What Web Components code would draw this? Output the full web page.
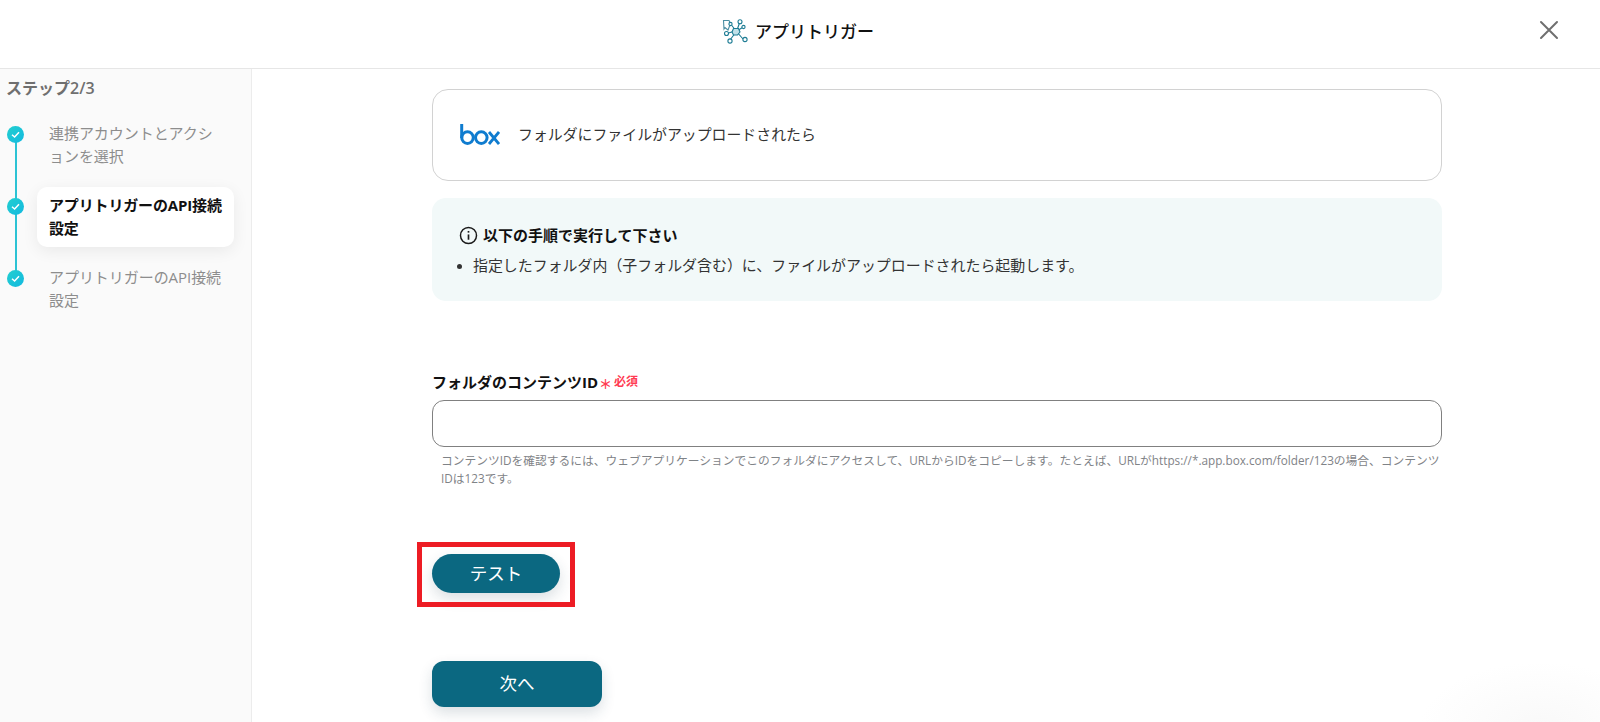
<!DOCTYPE html>
<html lang="ja"><head><meta charset="utf-8"><title>アプリトリガー</title>
<style>
html,body{margin:0;height:100%;overflow:hidden;background:#fff}
body{font-family:"Open Sans","Noto Sans CJK JP",sans-serif;color:#111}
</style></head><body>
<app-shell>
  <top-bar slot="top">アプリトリガー</top-bar>
  <step-rail slot="side"></step-rail>
  <trigger-form slot="main"></trigger-form>
</app-shell>
<script>
function def(name,html){customElements.define(name,class extends HTMLElement{constructor(){super();this.attachShadow({mode:'open'}).innerHTML=html}})}
def('app-shell',`<style>:host{display:grid;grid-template-rows:69px 1fr;grid-template-columns:252px 1fr;height:722px;overflow:hidden;position:relative}
::slotted([slot=top]){grid-column:1/3}
.glow{position:absolute;right:-60px;bottom:-70px;width:240px;height:130px;border-radius:50%;background:radial-gradient(closest-side,#f9f9f9,#fff0);pointer-events:none}</style>
<slot name="top"></slot><slot name="side"></slot><slot name="main"></slot><div class="glow"></div>`);
def('top-bar',`<style>:host{display:flex;align-items:center;justify-content:center;border-bottom:1px solid #e6e6e6;box-sizing:border-box;position:relative;background:#fff;padding:0 4px 7px 0}
.t{display:flex;align-items:center;gap:7px;font-size:17px;font-weight:500;color:#111}
svg.i{width:26px;height:26px;display:block}
button{position:absolute;right:41px;top:20px;width:20px;height:20px;padding:0;border:0;background:none}
button svg{display:block}</style>
<div class="t"><svg class="i" viewBox="0 0 26 26" fill="none" stroke="#1d7c94" stroke-width="1.1">
<path d="M14.5 13.5 17.5 5M14.5 13.5 7.5 4.5M14 13.5 20.5 9.5M14.5 13.5 21 21M14 14 8 22M13 13 5 15.5"/>
<path d="M1.5 2.5H7L8.5 5.5 6 12 3 9.5 2 11z" stroke="#4b8ea3"/>
<path d="M11.5 10.5h5l1.5 3.5-2.5 3h-4l-1.5-3z" fill="#bfe0e8"/>
<circle cx="18" cy="3.8" r="2" fill="#fff"/><circle cx="21.5" cy="9" r="1.6" fill="#fff"/><circle cx="23" cy="21.5" r="2.1" fill="#fff"/><circle cx="8" cy="23" r="2.1" fill="#fff"/><circle cx="4.5" cy="15.5" r="2" fill="#fff"/><circle cx="8.5" cy="6" r="1.6" fill="#fff"/>
</svg><slot></slot></div>
<button aria-label="閉じる"><svg width="20" height="20" viewBox="0 0 20 20"><path d="M2 2 18 18M18 2 2 18" stroke="#6f6f6f" stroke-width="2" stroke-linecap="round"/></svg></button>`);
def('step-dot',`<style>:host{display:block;width:17px;height:17px;border-radius:50%;background:linear-gradient(135deg,#23cfcf,#12b9e0);flex:none}
svg{display:block}</style><svg width="17" height="17" viewBox="0 0 17 17"><path d="M5 8.8 7.6 11 12 6.3" fill="none" stroke="#fff" stroke-width="1.5"/></svg>`);
def('step-item',`<style>:host{display:grid;grid-template-columns:37px 197px;align-items:start;position:relative}
step-dot{margin:11px 0 0 7px;position:relative;z-index:1}
.b{padding:7px 12px;font-size:15px;line-height:22.5px;height:60px;box-sizing:border-box;color:#8d8d8d;border-radius:10px;letter-spacing:-.05px}
:host([active]) .b{background:#fff;color:#111;font-weight:700;box-shadow:0 4px 16px rgba(0,0,0,.07);letter-spacing:-.15px}</style>
<step-dot></step-dot><div class="b"><slot></slot></div>`);
def('step-rail',`<style>:host{display:block;background:#fafafa;border-right:1px solid #ececec;box-sizing:border-box;height:653px;position:relative}
h2{margin:0;padding:8px 0 0 6px;font-size:16px;line-height:22px;font-weight:600;color:#6f6f6f}
.list{display:flex;flex-direction:column;gap:12px;margin-top:16px;position:relative}
.line{position:absolute;left:15px;top:20px;width:2px;height:144px;background:#2cc3d4}</style>
<h2>ステップ2/3</h2><div class="list"><div class="line"></div>
<step-item>連携アカウントとアクションを選択</step-item>
<step-item active>アプリトリガーのAPI接続設定</step-item>
<step-item>アプリトリガーのAPI接続設定</step-item></div>`);
def('app-card',`<style>:host{display:flex;align-items:center;gap:18px;height:92px;box-sizing:border-box;border:1px solid #d2d2d2;border-radius:16px;padding:0 27px;font-size:14.9px;color:#333}
svg{display:block;flex:none}.x{margin-bottom:3px}</style>
<svg width="40" height="22" viewBox="0 0 40 22" fill="none" stroke="#0f7ccf" stroke-width="3"><path d="M1.7 0V14"/><circle cx="7.5" cy="13.6" r="5.8"/><circle cx="21.3" cy="13.6" r="5.8"/><path d="M29 8 39 20M39 8 29 20" stroke-width="2.8"/></svg><span class="x"><slot></slot></span>`);
def('notice-box',`<style>:host{display:block;height:103px;box-sizing:border-box;background:#f2f9f9;border-radius:14px;padding:26px 27px 0}
.h{display:flex;align-items:center;gap:5px;font-size:15px;line-height:22px;font-weight:600;color:#111}
svg{display:block}
ul{margin:8px 0 0;padding:0 0 0 14px;font-size:14.95px;line-height:22px;color:#333}li::marker{font-size:13px}</style>
<div class="h"><svg width="19" height="19" viewBox="0 0 18 18" fill="none" stroke="#1a1a1a" stroke-width="1.4"><circle cx="9" cy="9" r="7.6"/><path d="M9 8v5" stroke-width="1.6"/><path d="M9 4.7v1.6" stroke-width="1.6"/></svg>以下の手順で実行して下さい</div>
<ul><li>指定したフォルダ内（子フォルダ含む）に、ファイルがアップロードされたら起動します。</li></ul>`);
def('field-block',`<style>:host{display:block}
.l{display:flex;align-items:center;font-size:15px;line-height:20px;font-weight:700;color:#111}
.s{color:#ff3b52;font-size:13px;font-weight:700;margin:4px 2px 0 1px;line-height:16px}
.r{color:#ff3b52;font-size:12px;font-weight:700}
.inp{display:block;width:100%;height:47px;box-sizing:border-box;margin-top:8px;border:1px solid #808080;border-radius:12px;background:#fff}
.h{margin:4px 0 0;padding-left:9px;font-size:11.75px;line-height:18px;color:#7f8387}</style>
<div class="l">フォルダのコンテンツID<span class="s">＊</span><span class="r">必須</span></div>
<input class="inp" type="text" aria-label="フォルダのコンテンツID">
<p class="h">コンテンツIDを確認するには、ウェブアプリケーションでこのフォルダにアクセスして、URLからIDをコピーします。たとえば、URLがhttps://*.app.box.com/folder/123の場合、コンテンツIDは123です。</p>`);
def('action-button',`<style>:host{display:inline-flex;align-items:center;justify-content:center;background:#0b6881;color:#fff;font-size:17.5px;line-height:1;box-shadow:0 6px 14px rgba(30,60,80,.16);border-radius:var(--r,20px);width:var(--w,128px);height:var(--h,39px);box-sizing:border-box}</style><slot></slot>`);
def('highlight-frame',`<style>:host{display:inline-block;position:relative;line-height:0}
.f{position:absolute;left:-15px;top:-12px;width:158px;height:65px;box-sizing:border-box;border:5px solid #ed1c24;pointer-events:none}</style><slot></slot><div class="f"></div>`);
def('trigger-form',`<style>:host{display:block;padding:20px 158px 0 180px;height:653px;box-sizing:border-box;overflow:hidden}
app-card{margin-bottom:17px}
field-block{margin-top:71px}
.t{margin-top:67px}
.n{margin-top:68px}
.nb{--w:170px;--h:46px;--r:12px}</style>
<app-card>フォルダにファイルがアップロードされたら</app-card>
<notice-box></notice-box>
<field-block></field-block>
<div class="t"><highlight-frame><action-button>テスト</action-button></highlight-frame></div>
<div class="n"><action-button class="nb">次へ</action-button></div>`);
</script></body></html>
